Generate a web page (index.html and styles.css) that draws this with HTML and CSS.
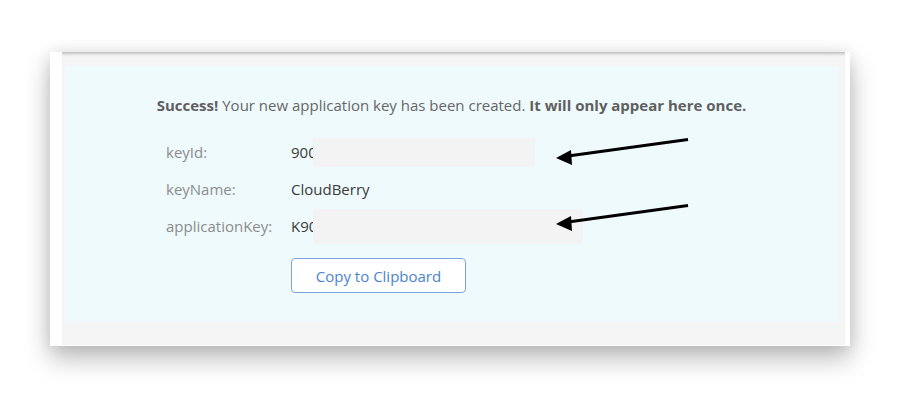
FILE: index.html
```html
<!DOCTYPE html>
<html lang="en">
<head>
    <meta charset="UTF-8">
    <title>Application Key Created</title>
    <link rel="stylesheet" href="styles.css">
</head>
<body>
    <div class="card">
        <div class="frame">
            <!-- Success panel -->
            <section class="panel">
                <p class="message"><b>Success!</b> Your new application key has been created. <b>It will only appear here once.</b></p>
                <div class="rows">
                    <div class="row">
                        <span class="label">keyId:</span>
                        <span class="value">900<span class="redact redact-id"></span></span>
                    </div>
                    <div class="row">
                        <span class="label">keyName:</span>
                        <span class="value">CloudBerry</span>
                    </div>
                    <div class="row">
                        <span class="label">applicationKey:</span>
                        <span class="value">K90<span class="redact redact-key"></span></span>
                    </div>
                </div>
                <button class="copy-btn" type="button">Copy to Clipboard</button>
            </section>
        </div>
    </div>

    <!-- Annotation arrows -->
    <svg class="arrows" width="900" height="400" viewBox="0 0 900 400">
        <line x1="688" y1="139.5" x2="568" y2="156" stroke="#000" stroke-width="3"/>
        <polygon points="556,158 571,150 572,165" fill="#000"/>
        <line x1="688" y1="205.5" x2="568" y2="222" stroke="#000" stroke-width="3"/>
        <polygon points="556,224 571,216 572,231" fill="#000"/>
    </svg>
</body>
</html>
```

FILE: styles.css
```css
/* General Styles */
body {
    margin: 0;
    background: #fff;
    font-family: "Open Sans", Arial, sans-serif;
    font-size: 15px;
    line-height: 20px;
    color: #444;
    position: relative;
    width: 900px;
    height: 400px;
    overflow: hidden;
}
.card {
    margin: 52px 0 0 50px;
    width: 800px;
    height: 294px;
    box-sizing: border-box;
    padding: 0 5px 1px 12px;
    background: #fff;
    box-shadow: 0 12px 24px rgba(0, 0, 0, 0.28), 0 0 14px rgba(0, 0, 0, 0.08);
}
.frame {
    height: 100%;
    box-sizing: border-box;
    padding: 14px 7px 23px 3px;
    background: #f5f5f5;
    box-shadow: inset 0 4px 3px -2px rgba(0, 0, 0, 0.22);
}

/* Success panel */
.panel {
    height: 100%;
    box-sizing: border-box;
    padding-top: 29px;
    background: #effafd;
}
.message {
    margin: 0;
    text-align: center;
    color: #666;
}
.message b {
    font-weight: 700;
    color: #5f5f5f;
}
.rows {
    margin: 18px 0 0 101px;
}
.row {
    display: flex;
    align-items: center;
    height: 37px;
}
.label {
    width: 125px;
    color: #8c8c8c;
}
.value {
    position: relative;
    color: #3a3a3a;
}
.redact {
    position: absolute;
    left: 22px;
    background: #f3f3f3;
}
.redact-id {
    top: -4px;
    width: 222px;
    height: 29px;
}
.redact-key {
    top: -7px;
    width: 270px;
    height: 35px;
}
.copy-btn {
    display: block;
    margin: 14px 0 0 226px;
    width: 175px;
    height: 35px;
    padding: 0;
    font-family: inherit;
    font-size: 15px;
    color: #4a84cf;
    background: #fff;
    border: 1px solid #79a4dc;
    border-radius: 4px;
}

/* Annotation */
.arrows {
    position: absolute;
    left: 0;
    top: 0;
    pointer-events: none;
}
```
